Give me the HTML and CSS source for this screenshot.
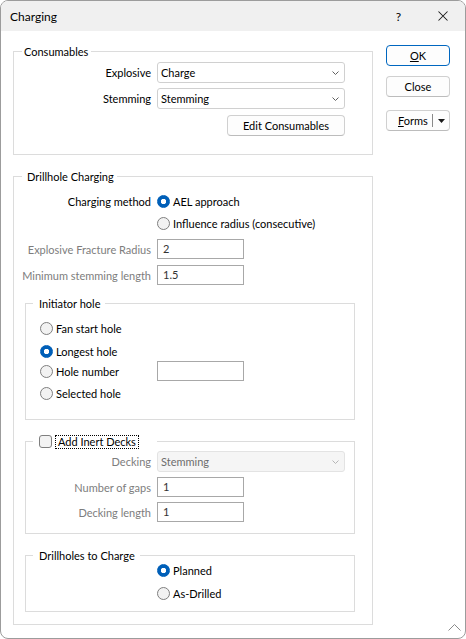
FILE: index.html
```html
<!DOCTYPE html>
<html>
<head>
<meta charset="utf-8">
<link rel="stylesheet" href="styles.css">
</head>
<body>
<div class="window">
  <div class="titlebar">
    <span class="title">Charging</span>
    <span class="help">?</span>
    <svg class="xbtn" width="10" height="10" viewBox="0 0 10 10"><path d="M0.5 0.5 L9.5 9.5 M9.5 0.5 L0.5 9.5" stroke="#1a1a1a" stroke-width="1.05" fill="none"/></svg>
  </div>
  <div class="client">
    <div class="main">
      <fieldset class="group consumables">
        <legend class="lg-cons">Consumables</legend>
        <div class="row r21">
          <span class="lbl">Explosive</span>
          <div class="combo"><span>Charge</span><svg width="7" height="4" viewBox="0 0 7 4"><polyline points="0.5,0.5 3.5,3.5 6.5,0.5" fill="none" stroke="#606060"/></svg></div>
        </div>
        <div class="row r21 mt5">
          <span class="lbl">Stemming</span>
          <div class="combo"><span>Stemming</span><svg width="7" height="4" viewBox="0 0 7 4"><polyline points="0.5,0.5 3.5,3.5 6.5,0.5" fill="none" stroke="#606060"/></svg></div>
        </div>
        <div class="row r21 mt6 end">
          <button class="btn edit">Edit Consumables</button>
        </div>
      </fieldset>

      <fieldset class="group drill">
        <legend class="lg-drill">Drillhole Charging</legend>
        <div class="row r20">
          <span class="lbl">Charging method</span>
          <span class="ritem"><span class="radio on"></span>AEL approach</span>
        </div>
        <div class="row r20 mt2 indent">
          <span class="ritem"><span class="radio"></span>Influence radius (consecutive)</span>
        </div>
        <div class="row r20 mt6">
          <span class="lbl dis">Explosive Fracture Radius</span>
          <div class="tbox">2</div>
        </div>
        <div class="row r20 mt6">
          <span class="lbl dis">Minimum stemming length</span>
          <div class="tbox">1.5</div>
        </div>

        <fieldset class="group inner initiator">
          <legend class="lg-inner">Initiator hole</legend>
          <div class="radios">
            <div class="row r20"><span class="ritem"><span class="radio"></span>Fan start hole</span></div>
            <div class="row r20 mt3"><span class="ritem"><span class="radio on"></span>Longest hole</span></div>
            <div class="row r20"><span class="ritem wide"><span class="radio"></span>Hole number</span><div class="tbox"></div></div>
            <div class="row r20 mt2"><span class="ritem"><span class="radio"></span>Selected hole</span></div>
          </div>
        </fieldset>

        <fieldset class="group inner decks">
          <legend class="lg-check"><span class="check"></span><span class="focus">Add Inert Decks</span></legend>
          <div class="row r21">
            <span class="lbl dis">Decking</span>
            <div class="combo disabled"><span>Stemming</span><svg width="7" height="4" viewBox="0 0 7 4"><polyline points="0.5,0.5 3.5,3.5 6.5,0.5" fill="none" stroke="#b5b5b5"/></svg></div>
          </div>
          <div class="row r20 mt5">
            <span class="lbl dis">Number of gaps</span>
            <div class="tbox">1</div>
          </div>
          <div class="row r20 mt5">
            <span class="lbl dis">Decking length</span>
            <div class="tbox">1</div>
          </div>
        </fieldset>

        <fieldset class="group inner tocharge">
          <legend class="lg-inner">Drillholes to Charge</legend>
          <div class="row r13 indent2"><span class="ritem"><span class="radio on"></span>Planned</span></div>
          <div class="row r13 indent2 mt10"><span class="ritem"><span class="radio"></span>As-Drilled</span></div>
        </fieldset>
      </fieldset>
    </div>

    <div class="side">
      <button class="btn sbtn ok"><u>O</u>K</button>
      <button class="btn sbtn close">Close</button>
      <button class="btn sbtn forms"><span class="ftext"><u>F</u>orms</span><span class="sep"></span><span class="arr"><svg width="7" height="4" viewBox="0 0 7 4"><polygon points="0,0 7,0 3.5,4" fill="#1a1a1a"/></svg></span></button>
    </div>
  </div>
  <svg class="grip" width="13" height="7" viewBox="0 0 13 7"><polyline points="0.5,6.5 6.5,0.5 12.5,6.5" fill="none" stroke="#8a8a8a"/></svg>
</div>
</body>
</html>
```
FILE: styles.css
```css
html, body {
  margin: 0;
  padding: 0;
  background: #ffffff;
}
body {
  font-family: "Lato", "Liberation Sans", sans-serif;
  font-size: 11px;
  color: #000;
}
.window {
  position: relative;
  width: 466px;
  height: 639px;
  box-sizing: border-box;
  border: 1px solid #9c9c9c;
  border-radius: 8px;
  overflow: hidden;
  background: #fff;
}
.titlebar {
  height: 30px;
  background: #f0f0f0;
  display: flex;
  align-items: center;
  padding: 0 17px 0 9px;
}
.title {
  font-size: 12px;
  flex: 1;
}
.help {
  font-size: 12px;
  margin-right: 37px;
}
.xbtn {
  display: block;
}
.client {
  display: flex;
  padding: 12px 0 0 12px;
  column-gap: 13px;
}
.main {
  width: 360px;
  flex: none;
}
.group {
  margin: 0;
  padding: 0;
  border: 1px solid #dcdcdc;
  min-width: 0;
  box-sizing: border-box;
}
legend {
  line-height: 17px;
  font-size: 11px;
  padding: 0;
}
.lg-cons { margin-left: 8px; padding: 0 3px 0 2px; }
.lg-drill { margin-left: 8px; padding: 0 3px 0 5px; }
.lg-inner { margin-left: 7px; padding: 0 5px 0 6px; }
.lg-check {
  margin-left: 7px;
  padding: 0 18px 0 6px;
  height: 17px;
  box-sizing: border-box;
  display: flex;
  align-items: center;
}
.consumables {
  padding: 2px 0 18px;
}
.drill {
  margin-top: 13px;
  padding: 6px 0 12px;
}
.inner {
  margin-left: 11px;
  width: 330px;
}
.initiator {
  margin-top: 10px;
  padding: 6px 0 16px;
}
.decks {
  margin-top: 13px;
  padding: 1px 0 11px;
}
.tocharge {
  margin-top: 13px;
  padding: 0 0 11px;
}
.row {
  display: flex;
  align-items: center;
}
.r20 { height: 20px; }
.r21 { height: 21px; }
.r13 { height: 13px; }
.mt2 { margin-top: 2px; }
.mt3 { margin-top: 3px; }
.mt5 { margin-top: 5px; }
.mt6 { margin-top: 6px; }
.mt10 { margin-top: 10px; }
.end { justify-content: flex-end; width: 331px; }
.indent { padding-left: 143px; }
.indent2 { padding-left: 131px; }
.lbl {
  flex: none;
  width: 137px;
  margin-right: 6px;
  text-align: right;
  white-space: nowrap;
}
.inner .lbl { width: 125px; }
.lbl.dis { color: #7d7d7d; }
.combo {
  box-sizing: border-box;
  width: 188px;
  height: 21px;
  border: 1px solid #d0d0d0;
  border-radius: 3px;
  background: #fff;
  display: flex;
  align-items: center;
  justify-content: space-between;
  padding: 0 5px 0 3px;
}
.combo svg { display: block; }
.combo.disabled {
  background: #f5f5f5;
  border-color: #e3e3e3;
  color: #6d6d6d;
}
.tbox {
  box-sizing: border-box;
  width: 87px;
  height: 20px;
  border: 1px solid #a8a8a8;
  background: #fff;
  padding: 0 5px;
  line-height: 18px;
  color: #333;
}
.ritem {
  display: flex;
  align-items: center;
  gap: 3px;
  white-space: nowrap;
}
.radios { padding-left: 14px; }
.ritem.wide { width: 117px; flex: none; }
.radio {
  box-sizing: border-box;
  width: 13px;
  height: 13px;
  border-radius: 50%;
  border: 1px solid #7f7f7f;
  background: #f2f2f2;
  flex: none;
}
.radio.on {
  border-color: #005fb8;
  background: radial-gradient(circle, #ffffff 0 2.4px, #005fb8 3px);
}
.check {
  box-sizing: border-box;
  width: 13px;
  height: 13px;
  border: 1px solid #7f7f7f;
  border-radius: 3px;
  background: #f3f3f3;
  flex: none;
  margin-right: 3px;
}
.focus {
  border: 1px dotted #000;
  padding: 0 2px;
  line-height: 12px;
}
.btn {
  box-sizing: border-box;
  height: 21px;
  border: 1px solid #d0d0d0;
  border-bottom-color: #bcbcbc;
  border-radius: 4px;
  background: #fdfdfd;
  font-family: inherit;
  font-size: 11px;
  color: #000;
  padding: 0;
  margin: 0;
}
.edit { width: 118px; }
.side {
  width: 64px;
  display: flex;
  flex-direction: column;
  padding-top: 2px;
}
.sbtn { width: 64px; }
.ok { border: 1px solid #0067c0; }
.close { margin-top: 10px; }
.forms {
  margin-top: 13px;
  display: flex;
  align-items: center;
}
.ftext {
  width: 45px;
  box-sizing: border-box;
  padding-left: 11px;
  text-align: left;
}
.sep {
  width: 1px;
  height: 13px;
  background: #8a8a8a;
}
.arr {
  flex: 1;
  display: flex;
  justify-content: center;
}
.arr svg { display: block; }
.grip {
  position: absolute;
  right: 4px;
  bottom: 7px;
}
```
